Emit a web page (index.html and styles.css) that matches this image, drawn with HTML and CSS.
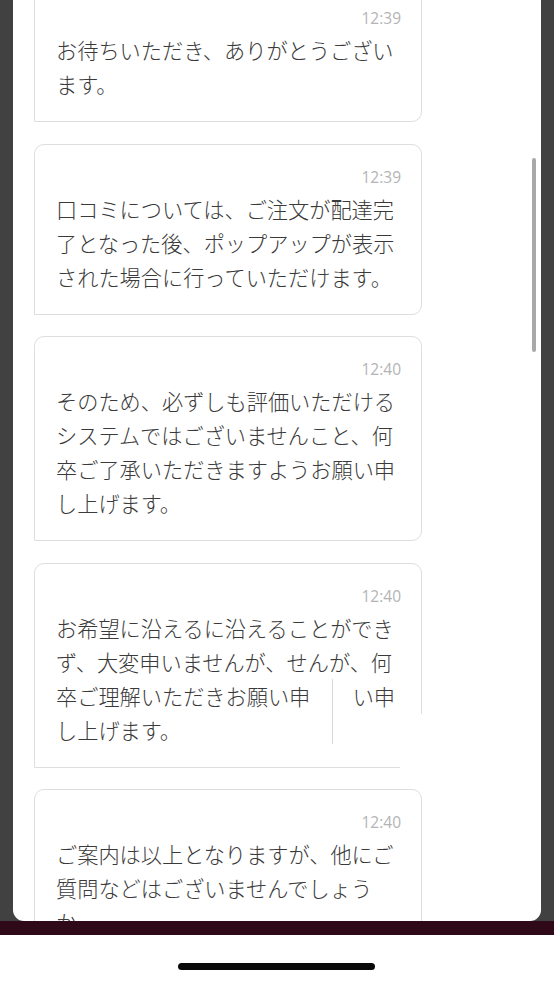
FILE: index.html
```html
<!DOCTYPE html>
<html lang="ja">
<head>
<meta charset="utf-8">
<link rel="stylesheet" href="styles.css">
</head>
<body>
<div class="screen">
  <div class="panel">
    <div class="messages">
      <div class="card">
        <div class="time">12:39</div>
        <p class="text">お待ちいただき、ありがとうござい<br>ます。</p>
      </div>
      <div class="card">
        <div class="time">12:39</div>
        <p class="text">口コミについては、ご注文が配達完<br>了となった後、ポップアップが表示<br>された場合に行っていただけます。</p>
      </div>
      <div class="card">
        <div class="time">12:40</div>
        <p class="text">そのため、必ずしも評価いただける<br>システムではございませんこと、何<br>卒ご了承いただきますようお願い申<br>し上げます。</p>
      </div>
      <div class="card card-glitch">
        <div class="time">12:40</div>
        <p class="text">お希望に沿えるに沿えることができ<br>ず、大変申いませんが、せんが、何<br>卒ご理解いただきお願い申　　い申<br>し上げます。</p>
        <span class="glitch-line"></span>
        <span class="glitch-cover"></span>
        <span class="glitch-corner"></span>
      </div>
      <div class="card">
        <div class="time">12:40</div>
        <p class="text">ご案内は以上となりますが、他にご<br>質問などはございませんでしょう<br>か。</p>
      </div>
    </div>
    <div class="scrollbar"></div>
  </div>
</div>
<div class="strip"></div>
<div class="home-area"><div class="home-bar"></div></div>
</body>
</html>
```
FILE: styles.css
```css
* { box-sizing: border-box; }
html, body { margin: 0; padding: 0; }
body {
  width: 554px;
  height: 984px;
  background: #ffffff;
  overflow: hidden;
  font-family: "Noto Sans CJK JP", "Open Sans", sans-serif;
}
.screen {
  height: 921px;
  background: #414141;
  padding: 0 13px 0 13px;
}
.panel {
  position: relative;
  height: 921px;
  background: #ffffff;
  border-radius: 0 0 11px 11px;
  overflow: hidden;
}
.messages {
  display: flex;
  flex-direction: column;
  gap: 21.5px;
  margin-top: -15px;
  padding-left: 21px;
}
.card {
  position: relative;
  width: 388px;
  border: 1px solid #dedede;
  border-radius: 10px 10px 10px 0;
  padding: 22px 20px 20px 21px;
  background: #fff;
}
.time {
  font-family: "Open Sans", "Noto Sans", sans-serif;
  font-size: 15.5px;
  line-height: 20px;
  color: #b4b4b4;
  text-align: right;
  margin-bottom: 5px;
}
.text {
  margin: 0;
  font-size: 21.2px;
  font-weight: 300;
  line-height: 34px;
  color: #3a3a3a;
  white-space: nowrap;
}
.glitch-line {
  position: absolute;
  left: 297px;
  top: 115px;
  width: 1px;
  height: 65px;
  background: #d8d8d8;
}
.glitch-cover {
  position: absolute;
  left: 298px;
  top: 150px;
  width: 92px;
  height: 52px;
  background: #fff;
}
.glitch-corner {
  position: absolute;
  left: 365px;
  top: 190px;
  width: 25px;
  height: 16px;
  background: #fff;
}
.scrollbar {
  position: absolute;
  left: 519px;
  top: 158px;
  width: 4px;
  height: 194px;
  border-radius: 2px;
  background: #a9a9a9;
}
.strip {
  height: 14px;
  background: #2f0918;
}
.home-area {
  height: 49px;
  background: #ffffff;
  padding-top: 28px;
}
.home-bar {
  width: 197px;
  height: 7px;
  margin-left: 178px;
  border-radius: 4px;
  background: #0a0a0a;
}
```
